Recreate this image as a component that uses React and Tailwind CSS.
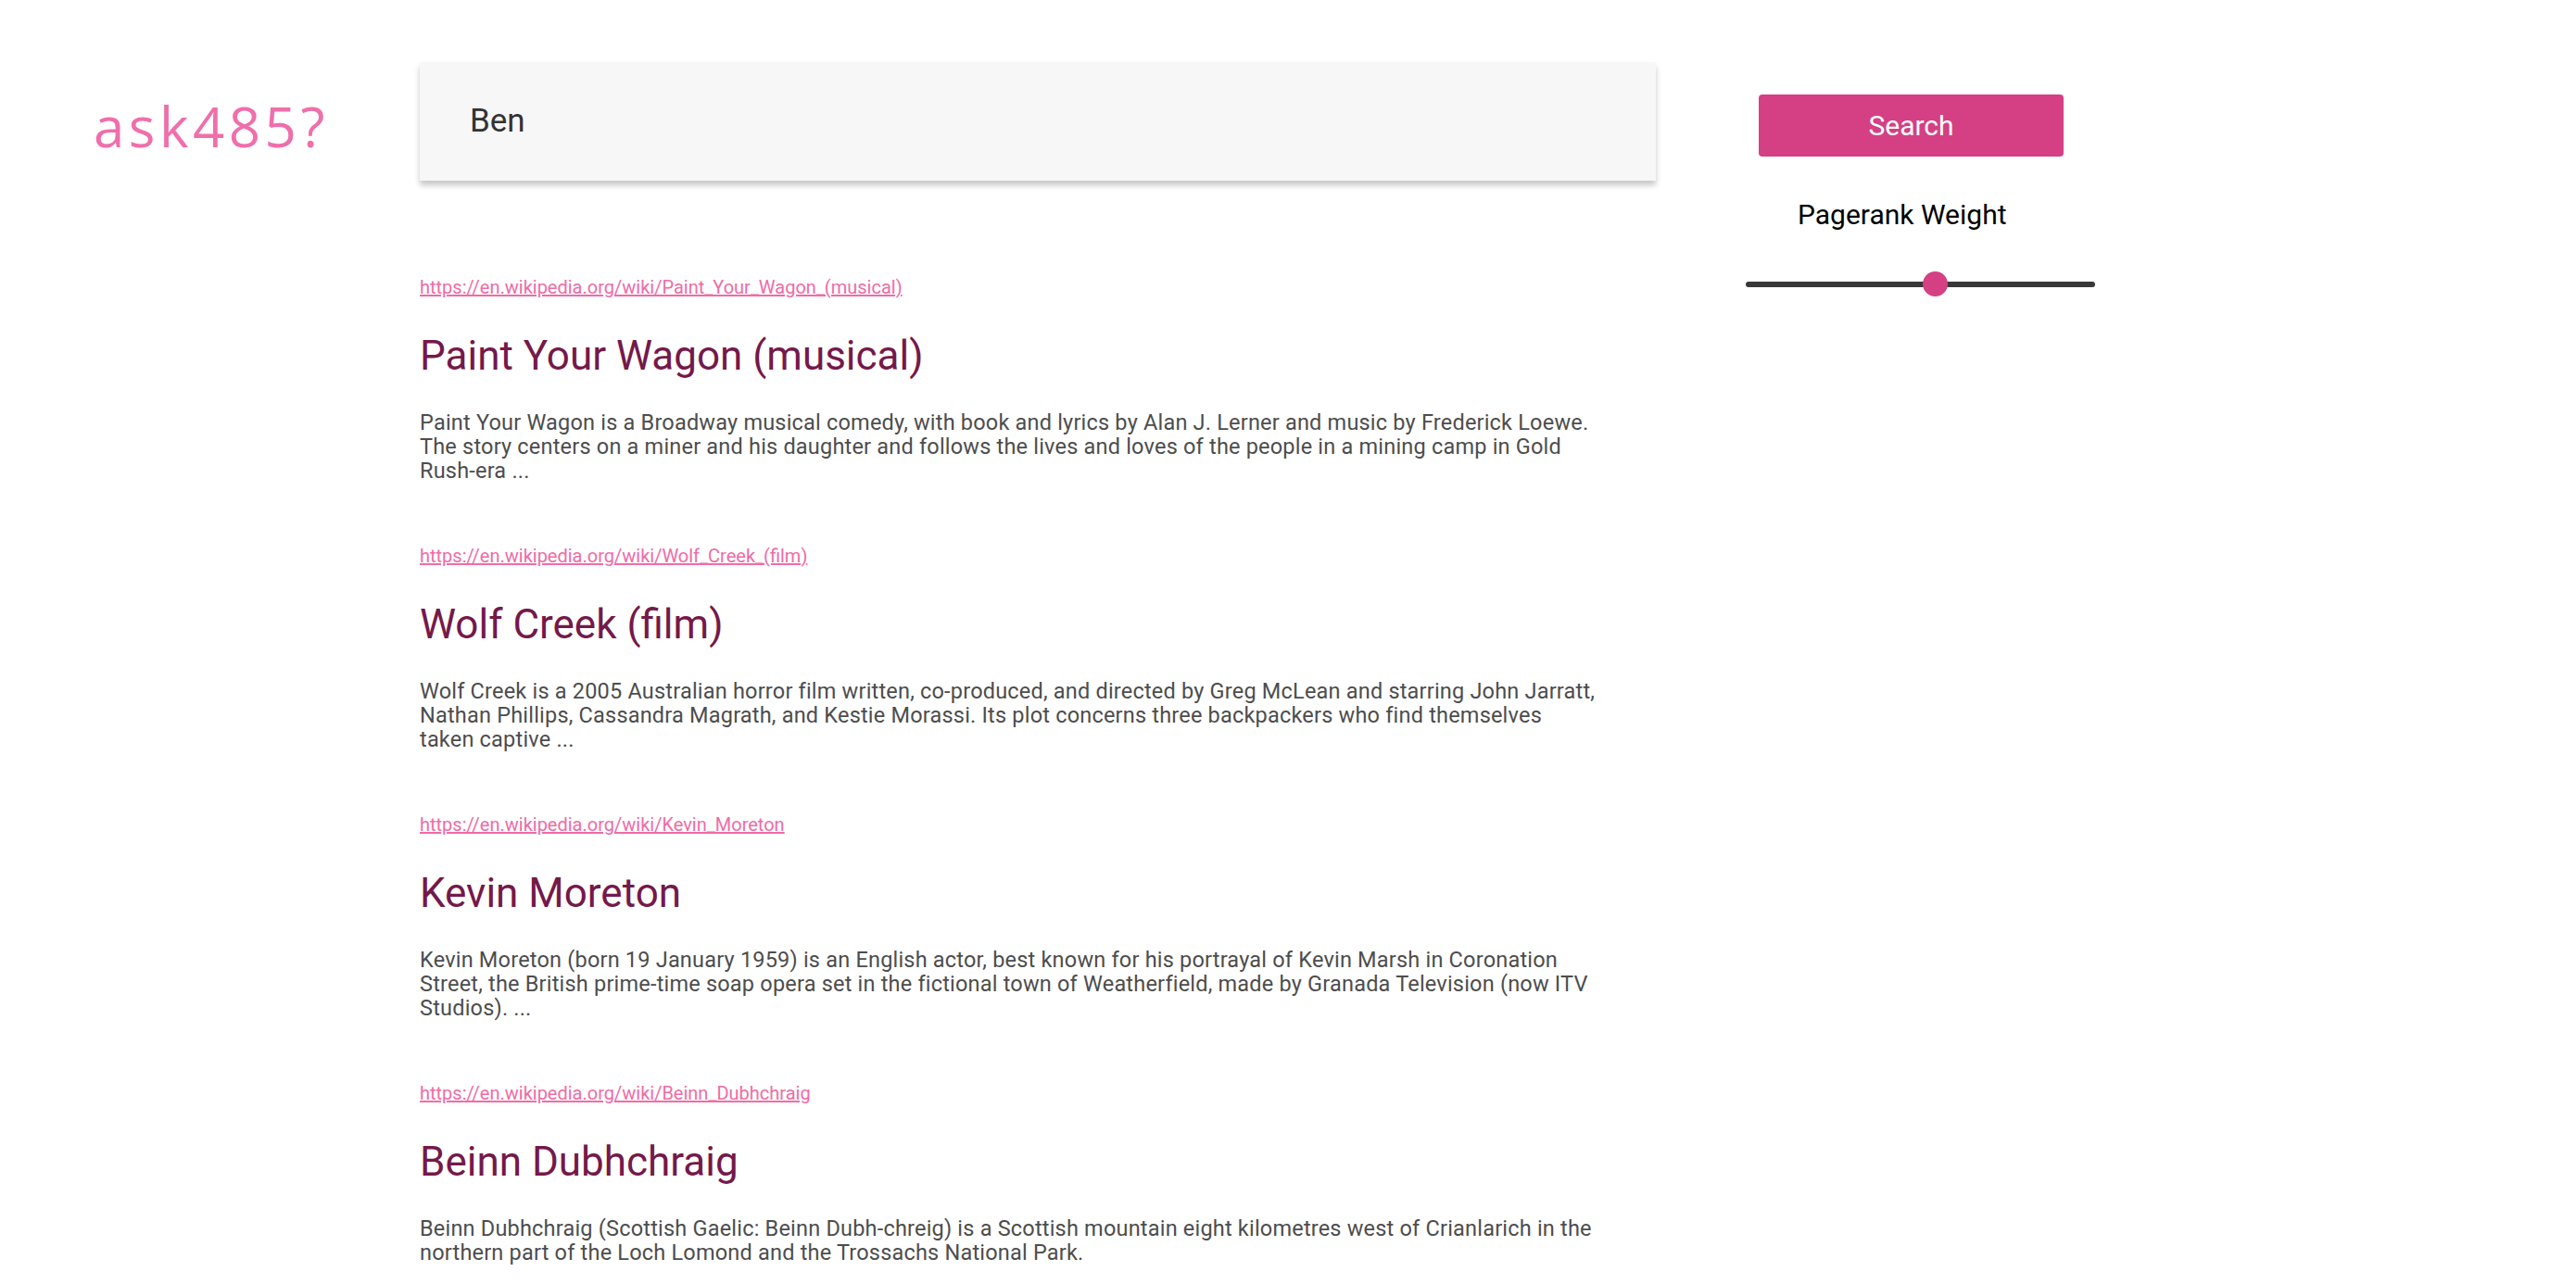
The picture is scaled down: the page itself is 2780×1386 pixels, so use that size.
import React from "react";

const results = [
  {
    url: "https://en.wikipedia.org/wiki/Paint_Your_Wagon_(musical)",
    title: "Paint Your Wagon (musical)",
    desc: "Paint Your Wagon is a Broadway musical comedy, with book and lyrics by Alan J. Lerner and music by Frederick Loewe. The story centers on a miner and his daughter and follows the lives and loves of the people in a mining camp in Gold Rush-era ...",
  },
  {
    url: "https://en.wikipedia.org/wiki/Wolf_Creek_(film)",
    title: "Wolf Creek (film)",
    desc: "Wolf Creek is a 2005 Australian horror film written, co-produced, and directed by Greg McLean and starring John Jarratt, Nathan Phillips, Cassandra Magrath, and Kestie Morassi. Its plot concerns three backpackers who find themselves taken captive ...",
  },
  {
    url: "https://en.wikipedia.org/wiki/Kevin_Moreton",
    title: "Kevin Moreton",
    desc: "Kevin Moreton (born 19 January 1959) is an English actor, best known for his portrayal of Kevin Marsh in Coronation Street, the British prime-time soap opera set in the fictional town of Weatherfield, made by Granada Television (now ITV Studios). ...",
  },
  {
    url: "https://en.wikipedia.org/wiki/Beinn_Dubhchraig",
    title: "Beinn Dubhchraig",
    desc: "Beinn Dubhchraig (Scottish Gaelic: Beinn Dubh-chreig) is a Scottish mountain eight kilometres west of Crianlarich in the northern part of the Loch Lomond and the Trossachs National Park.",
  },
];

const Result = ({ item }) => {
  return (
    <div className="mb-[67px]">
      <a
        href="#"
        className="block text-[20px] leading-[24px] text-[#f06ba6] underline"
      >
        {item.url}
      </a>
      <h2 className="mt-[36px] text-[44px] leading-[52px] text-[#75194a]">
        {item.title}
      </h2>
      <p className="mt-[33px] text-[23.5px] leading-[26px] tracking-[0.2px] text-[#4d4d4d]">
        {item.desc}
      </p>
    </div>
  );
};

const SearchBox = ({ value, onChange }) => {
  return (
    <div className="flex items-center h-[128px] bg-[#f7f7f7] shadow-[0_5px_6px_rgba(0,0,0,0.22)]">
      <input
        value={value}
        onChange={onChange}
        className="w-full pl-[54px] bg-transparent outline-none border-0 text-[35px] text-[#333] font-['Roboto',sans-serif]"
      />
    </div>
  );
};

const Slider = ({ value }) => {
  return (
    <div className="relative ml-[97px] mt-[39px] w-[377px] h-[27px] flex items-center">
      <div className="w-full h-[6px] rounded-full bg-[#383838]" />
      <div
        className="absolute top-0 w-[27px] h-[27px] -ml-[13px] rounded-full bg-[#d44083]"
        style={{ left: value + "%" }}
      />
    </div>
  );
};

function App() {
  const [query, setQuery] = React.useState("Ben");
  return (
    <div className="flex w-full min-h-screen bg-white font-['Roboto',sans-serif]">
      <div className="w-[453px] shrink-0 pl-[101px] pt-[106px]">
        <h1 className="text-[60px] leading-none font-normal tracking-[4.5px] text-[#ef6fab] font-['Open_Sans',sans-serif]">
          ask485?
        </h1>
      </div>

      <div className="w-[1334px] shrink-0 pt-[67px]">
        <SearchBox value={query} onChange={(e) => setQuery(e.target.value)} />
        <div className="mt-[103px] w-[1272px]">
          {results.map((item) => (
            <Result key={item.url} item={item} />
          ))}
        </div>
      </div>

      <div className="flex flex-col pt-[102px]">
        <button className="ml-[111px] w-[329px] h-[67px] rounded-[4px] bg-[#d44083] text-white text-[30px]">
          Search
        </button>
        <div className="ml-[153px] mt-[40px] text-[30px] text-black">
          Pagerank Weight
        </div>
        <Slider value={54} />
      </div>
    </div>
  );
}

export default App;
